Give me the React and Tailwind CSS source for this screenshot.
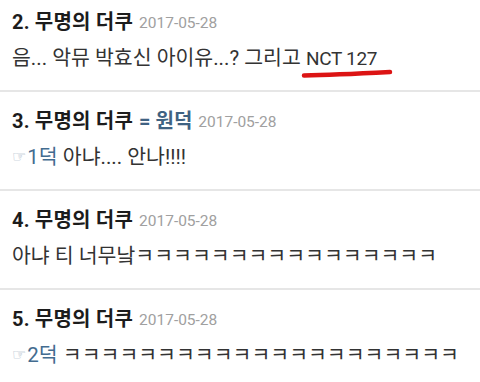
import React from "react";

const F = { fontFamily: 'Roboto, "Noto Sans CJK KR", sans-serif' };

function Header({ n, extra }) {
  return (
    <div className="flex items-center h-[28px] whitespace-nowrap">
      <span className="text-[20px] leading-[28px] font-bold text-[#1c1c1c] tracking-[0.2px]">{n}. 무명의 더쿠</span>
      {extra && (
        <span className="ml-[6px] text-[20px] leading-[28px] font-bold text-[#3f6282]">= 원덕</span>
      )}
      <span className="ml-[6px] text-[15.5px] leading-[28px] text-[#a0a0a0] pt-[1px]">2017-05-28</span>
    </div>
  );
}

function Hand() {
  return (
    <span
      className="inline-block text-[16px] leading-[28px] text-[#9db0c2] mr-[1px] align-top"
      style={{ fontFamily: '"DejaVu Sans", sans-serif' }}
    >
      ☞
    </span>
  );
}

function Body({ children }) {
  return (
    <div className="mt-[8px] h-[28px] leading-[28px] text-[20.5px] text-[#333] whitespace-nowrap overflow-visible">
      {children}
    </div>
  );
}

export default function App() {
  return (
    <div className="w-[480px] h-[382px] overflow-hidden bg-white" style={F}>
      <div className="px-3 pt-[8px] pb-[18px] border-b-2 border-[#e6e6e6]">
        <Header n={2} />
        <Body>
          음... 악뮤 박효신 아이유...? 그리고{" "}
          <span className="relative inline-block text-[19px] tracking-[-0.3px]">
            NCT 127
            <svg className="absolute left-[-5px] top-[23px]" width="94" height="11" viewBox="0 0 94 11">
              <path d="M3 7.5 C 30 7, 60 5.5, 89 4" stroke="#dc1414" strokeWidth="4.5" strokeLinecap="round" fill="none" />
            </svg>
          </span>
        </Body>
      </div>
      <div className="px-3 pt-[15px] pb-[18px] border-b-2 border-[#e6e6e6]">
        <Header n={3} extra />
        <Body>
          <Hand />
          <span className="text-[#436c90]">1덕</span> 아냐.... 안나!!!!
        </Body>
      </div>
      <div className="px-3 pt-[15px] pb-[18px] border-b-2 border-[#e6e6e6]">
        <Header n={4} />
        <Body>아냐 티 너무낰ㅋㅋㅋㅋㅋㅋㅋㅋㅋㅋㅋㅋㅋㅋㅋㅋ</Body>
      </div>
      <div className="px-3 pt-[15px] pb-[18px]">
        <Header n={5} />
        <Body>
          <Hand />
          <span className="text-[#436c90]">2덕</span> ㅋㅋㅋㅋㅋㅋㅋㅋㅋㅋㅋㅋㅋㅋㅋㅋㅋㅋㅋㅋㅋ
        </Body>
      </div>
    </div>
  );
}
